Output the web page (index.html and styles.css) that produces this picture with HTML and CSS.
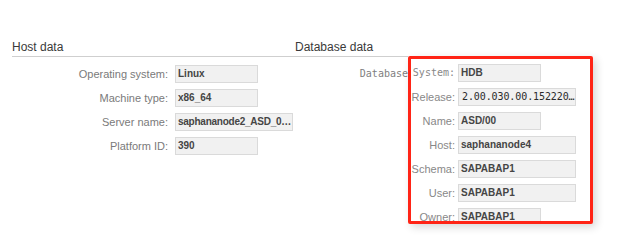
FILE: index.html
```html
<!DOCTYPE html>
<html lang="en">
<head>
<meta charset="utf-8">
<title>Host and database data</title>
<link rel="stylesheet" href="styles.css">
</head>
<body>
<div class="page">
  <section class="col host">
    <h2 class="sec-title">Host data</h2>
    <div class="form form-host">
      <span class="label">Operating system:</span><div class="field">Linux</div>
      <span class="label">Machine type:</span><div class="field">x86_64</div>
      <span class="label">Server name:</span><div class="field wide tight">saphananode2_ASD_0…</div>
      <span class="label">Platform ID:</span><div class="field">390</div>
    </div>
  </section>
  <section class="col db">
    <h2 class="sec-title">Database data</h2>
    <div class="db-prefix">Database</div>
  </section>
  <div class="highlight">
    <div class="form form-db">
      <span class="label mono">System:</span><div class="field">HDB</div>
      <span class="label">Release:</span><div class="field wide mono-val">2.00.030.00.152220…</div>
      <span class="label">Name:</span><div class="field">ASD/00</div>
      <span class="label">Host:</span><div class="field wide">saphananode4</div>
      <span class="label">Schema:</span><div class="field wide">SAPABAP1</div>
      <span class="label">User:</span><div class="field wide">SAPABAP1</div>
      <span class="label">Owner:</span><div class="field">SAPABAP1</div>
    </div>
  </div>
</div>
</body>
</html>
```

FILE: styles.css
```css
html, body {
  margin: 0;
  background: #ffffff;
}

body {
  font-family: "Liberation Sans", Arial, sans-serif;
  width: 634px;
  height: 247px;
  overflow: hidden;
}

.page {
  display: flex;
  align-items: flex-start;
  padding: 40px 0 0 12px;
}

.host {
  width: 283px;
}

.db {
  width: 113px;
}

.sec-title {
  margin: 0;
  font-size: 12px;
  font-weight: normal;
  line-height: 14px;
  color: #3a3a3a;
  padding-bottom: 2px;
  border-bottom: 1px solid #cfcfcf;
}

.form {
  display: grid;
  grid-template-columns: 158px auto;
  column-gap: 5px;
  row-gap: 6px;
  margin-top: 8px;
  justify-items: start;
}

.label {
  justify-self: stretch;
  text-align: right;
  padding-right: 2px;
  font-size: 11px;
  line-height: 18px;
  color: #7a7a7a;
  white-space: nowrap;
}

.label.mono {
  font-family: "DejaVu Sans Mono", "Liberation Mono", monospace;
  font-size: 10px;
  color: #808080;
  padding-right: 0;
}

.field {
  box-sizing: border-box;
  width: 83px;
  height: 18px;
  border: 1px solid #dadada;
  background: #f1f1f1;
  padding: 0 3px 0 2px;
  font-family: "Liberation Sans", Arial, sans-serif;
  font-weight: bold;
  font-size: 10px;
  line-height: 16px;
  color: #454545;
  white-space: nowrap;
  overflow: hidden;
  text-overflow: clip;
}

.field.wide {
  width: 118px;
}

.field.tight {
  letter-spacing: -0.25px;
  padding-right: 0;
}

.field.mono-val {
  font-family: "DejaVu Sans Mono", "Liberation Mono", monospace;
  font-weight: normal;
  font-size: 10px;
  letter-spacing: -0.1px;
  color: #2a2a2a;
  padding: 0 0 0 3px;
}

.db-prefix {
  margin-top: 8px;
  text-align: right;
  font-family: "DejaVu Sans Mono", "Liberation Mono", monospace;
  font-size: 10px;
  line-height: 18px;
  color: #808080;
}

.highlight {
  box-sizing: border-box;
  margin-top: 16px;
  width: 185px;
  height: 168px;
  border: 3px solid #ff2416;
  border-radius: 2px;
  background: #ffffff;
  box-shadow: 3px 3px 8px rgba(0, 0, 0, 0.16);
  padding-top: 5px;
  overflow: hidden;
}

.form-db {
  grid-template-columns: 44px auto;
  column-gap: 3px;
  margin-top: 0;
}

.form-db .label {
  padding-right: 0;
  color: #888888;
}
```
